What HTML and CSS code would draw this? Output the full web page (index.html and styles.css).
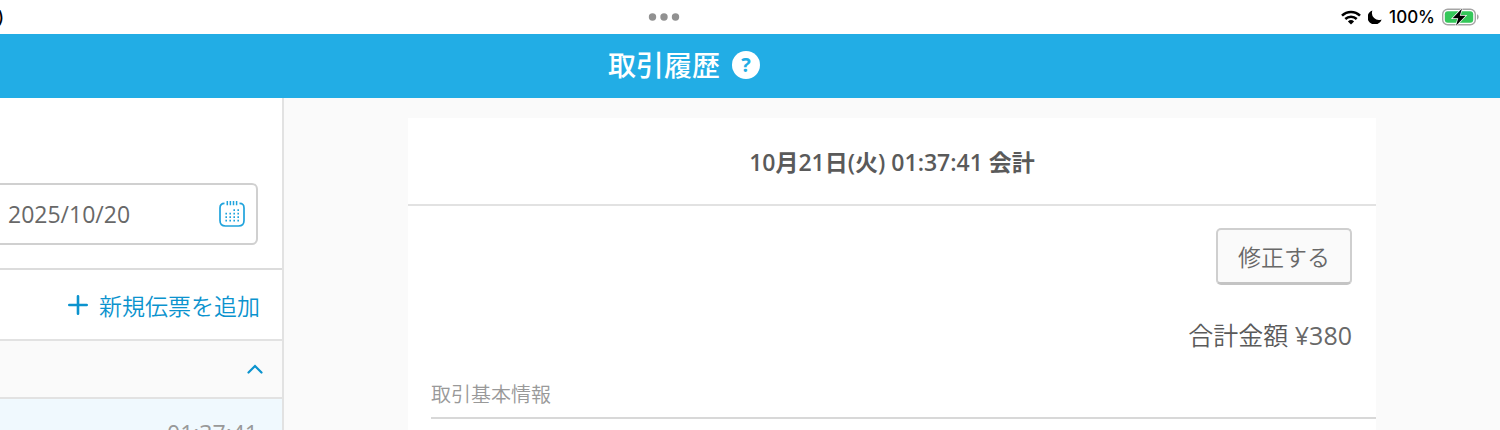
FILE: index.html
```html
<!DOCTYPE html>
<html lang="ja">
<head>
    <meta charset="UTF-8">
    <meta name="viewport" content="width=device-width, initial-scale=1.0">
    <title>取引履歴</title>
    <link rel="stylesheet" href="styles.css">
</head>
<body>
    <div class="status-bar">
        <div class="status-date">)</div>
        <svg class="status-dots" width="32" height="8" viewBox="0 0 32 8" fill="#919191">
            <circle cx="4.5" cy="4" r="3.7"/>
            <circle cx="16" cy="4" r="3.7"/>
            <circle cx="27.5" cy="4" r="3.7"/>
        </svg>
        <div class="status-icons">
            <svg width="20" height="15" viewBox="0 0 20 15" fill="none" stroke="#000" stroke-width="2.5">
                <path d="M1 5.6a12.8 12.8 0 0 1 18 0"/>
                <path d="M4.3 9a8.2 8.2 0 0 1 11.4 0"/>
                <path d="M10 14.6l-3.1-3.2a4.6 4.6 0 0 1 6.2 0z" fill="#000" stroke="none"/>
            </svg>
            <svg width="14" height="14" viewBox="0 0 14 14">
                <path d="M4.4.5A7.2 7.2 0 1 0 13.6 9.4 7 7 0 0 1 4.4.5z"/>
            </svg>
            <span class="battery-text">100%</span>
            <svg width="38" height="20" viewBox="0 0 38 20">
                <rect x=".7" y="2.2" width="32.6" height="15.6" rx="5" fill="#fff" stroke="#a5a5a5" stroke-width="1.4"/>
                <rect x="2.8" y="4.2" width="28.4" height="11.6" rx="3" fill="#34c759"/>
                <path d="M35 7.3c2.2.8 2.2 4.6 0 5.4z" fill="#a5a5a5"/>
                <path d="M20 1.4L10.6 11.2h5.6l-2.2 7.6L23.6 8.8h-5.8z" stroke="#fff" stroke-width="1.4" paint-order="stroke"/>
            </svg>
        </div>
    </div>

    <header class="header">
        <h1>取引履歴</h1>
        <button class="help" aria-label="ヘルプ">?</button>
    </header>

    <div class="main">
        <aside class="sidebar">
            <div class="search">
                <div class="date-field">
                    <input type="text" value="2025/10/20" aria-label="終了日">
                    <svg width="26" height="26" viewBox="0 0 26 26" fill="none" stroke="#1fa3dc" stroke-width="1.7">
                        <path d="M5.5 2.3C2.3 2.3 1 4 1 7v12.5C1 23.5 2.5 25 6.5 25h13c4 0 5.5-1.5 5.5-5.5V7c0-3-1.3-4.7-4.5-4.7"/>
                        <path d="M8.3 0v4.2M11.4 0v4.2M14.5 0v4.2M17.6 0v4.2" stroke-width="1.5"/>
                        <path d="M14.4 9.2h5.6M6.4 12.7h13.6M6.4 16.2h13.6M6.4 19.7h13.6" stroke-dasharray="1.6 2.4"/>
                    </svg>
                </div>
            </div>
            <div class="add-row">
                <button class="add">
                    <svg width="20" height="20" viewBox="0 0 20 20" fill="none" stroke="#0b93ce" stroke-width="2.6" stroke-linecap="round">
                        <path d="M10 1.3v17.4M1.3 10h17.4"/>
                    </svg>
                    新規伝票を追加
                </button>
            </div>
            <button class="group" aria-label="閉じる">
                <svg width="16" height="10" viewBox="0 0 16 10" fill="none" stroke="#0b93ce" stroke-width="2.2" stroke-linecap="round">
                    <path d="M1.5 8.5L8 2l6.5 6.5"/>
                </svg>
            </button>
            <a class="item" href="#">01:37:41</a>
        </aside>

        <main class="content">
            <div class="card">
                <h2>10月21日(火) 01:37:41 会計</h2>
                <div class="card-body">
                    <button class="edit">修正する</button>
                    <p class="total">合計金額 <span class="amount">¥380</span></p>
                </div>
                <h3>取引基本情報</h3>
            </div>
        </main>
    </div>
</body>
</html>
```

FILE: styles.css
```css
* {
    box-sizing: border-box;
}
body {
    display: flex;
    flex-direction: column;
    height: 100vh;
    margin: 0;
    overflow: hidden;
    background: #fff;
    color: #5a5a5a;
    font-family: "Open Sans", "Noto Sans CJK JP", sans-serif;
    font-weight: 350;
}
h1, h2, h3, p {
    margin: 0;
}
button, input {
    font: inherit;
    color: inherit;
}
button {
    padding: 0;
    border: none;
    background: none;
    cursor: pointer;
}
svg {
    display: block;
    flex: none;
}

.status-bar {
    display: grid;
    grid-template-columns: 1fr auto 1fr;
    align-items: center;
    flex: none;
    height: 34px;
    color: #000;
    font-family: Inter, sans-serif;
    font-size: 17px;
    font-weight: 500;
}
.status-date {
    display: flex;
    justify-content: flex-end;
    width: 4px;
    overflow: hidden;
}
.status-dots {
    margin-right: 172px;
}
.status-icons {
    display: flex;
    align-items: center;
    justify-content: flex-end;
    gap: 7px;
    padding-right: 20px;
}

.header {
    display: grid;
    grid-template-columns: 1fr auto 1fr;
    align-items: center;
    gap: 12px;
    flex: none;
    height: 64px;
    padding: 0 172px 2px 0;
    background: #22ade5;
    color: #fff;
}
.header h1 {
    grid-column: 2;
    font-size: 28px;
    font-weight: 500;
    line-height: 40px;
}
.help {
    width: 28px;
    height: 28px;
    border-radius: 50%;
    background: #fff;
    color: #22ade5;
    font-size: 20px;
    font-weight: 700;
    line-height: 28px;
}

.main {
    display: flex;
    flex: 1;
    min-height: 0;
}
.sidebar {
    display: flex;
    flex-direction: column;
    flex: none;
    width: 284px;
    border-right: 2px solid #e2e2e2;
    font-size: 23px;
}
.search {
    padding: 85px 24px 23px 0;
    border-bottom: 2px solid #dcdcdc;
}
.date-field {
    display: flex;
    align-items: center;
    height: 62px;
    padding: 0 11px 0 8px;
    border: 2px solid #d0d0d0;
    border-left: none;
    border-radius: 0 6px 6px 0;
}
.date-field input {
    flex: 1;
    min-width: 0;
    padding: 0;
    border: none;
    outline: none;
    background: none;
    color: #686868;
    font-weight: 400;
}
.add-row {
    display: flex;
    justify-content: flex-end;
    flex: none;
    height: 71px;
    padding-right: 22px;
    border-bottom: 2px solid #e2e2e2;
}
.add {
    display: flex;
    align-items: center;
    gap: 11px;
    color: #0b93ce;
}
.group {
    display: flex;
    align-items: center;
    justify-content: flex-end;
    flex: none;
    height: 58px;
    padding-right: 19px;
    border-bottom: 2px solid #e2e2e2;
    background: #fafafa;
}
.item {
    flex: 1;
    padding: 18px 24px 0 0;
    background: #f0f9fe;
    color: #999;
    font-weight: 400;
    text-align: right;
    text-decoration: none;
}

.content {
    flex: 1;
    padding: 20px 124px 0;
    background: #fafafa;
}
.card {
    height: 100%;
    background: #fff;
}
.card h2 {
    padding: 28px 0 26px;
    border-bottom: 2px solid #e2e2e2;
    font-size: 23px;
    font-weight: 600;
    line-height: 32px;
    text-align: center;
}
.card-body {
    display: flex;
    flex-direction: column;
    align-items: flex-end;
    gap: 32px;
    padding: 22px 24px 27px;
}
.edit {
    width: 136px;
    height: 57px;
    border: 2px solid #cfcfcf;
    border-bottom: 3px solid #c4c4c4;
    border-radius: 5px;
    background: #fafafa;
    color: #686868;
    font-size: 23px;
}
.total {
    font-size: 25px;
    line-height: 36px;
}
.amount {
    color: #686868;
    font-weight: 400;
}
.card h3 {
    margin-left: 23px;
    padding-bottom: 7px;
    border-bottom: 2px solid #d8d8d8;
    color: #999;
    font-size: 20px;
    font-weight: 350;
    line-height: 30px;
}
```
